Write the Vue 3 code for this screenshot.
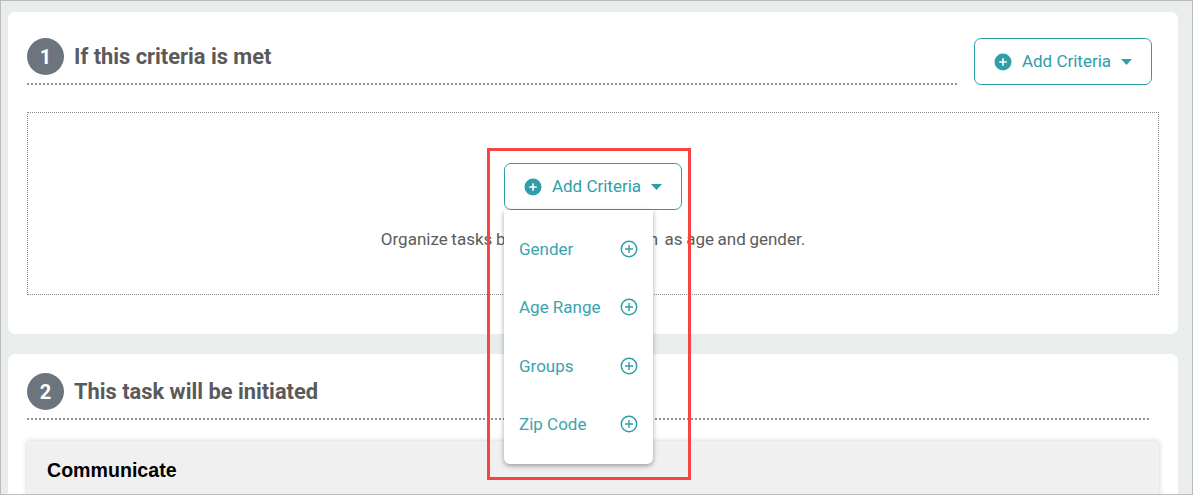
<script setup>
const items = ['Gender', 'Age Range', 'Groups', 'Zip Code']
</script>

<template>
  <div class="page">
    <section class="card first">
      <div class="head-row">
        <div class="head">
          <span class="step">1</span>
          <h2>If this criteria is met</h2>
        </div>
        <button class="add top-add">
          <svg class="solid" viewBox="0 0 18 18" width="18" height="18"><circle cx="9" cy="9" r="8.5" fill="#2e9ea8"/><path d="M9 5.2v7.6M5.2 9h7.6" stroke="#fff" stroke-width="1.6"/></svg>
          <span>Add Criteria</span>
          <svg class="caret" viewBox="0 0 11 6" width="11" height="6"><path d="M0 0h11L5.5 6z" fill="#2e9ea8"/></svg>
        </button>
      </div>
      <div class="empty">
        <div class="anchor">
          <button class="add">
            <svg class="solid" viewBox="0 0 18 18" width="18" height="18"><circle cx="9" cy="9" r="8.5" fill="#2e9ea8"/><path d="M9 5.2v7.6M5.2 9h7.6" stroke="#fff" stroke-width="1.6"/></svg>
            <span>Add Criteria</span>
            <svg class="caret" viewBox="0 0 11 6" width="11" height="6"><path d="M0 0h11L5.5 6z" fill="#2e9ea8"/></svg>
          </button>
          <ul class="menu">
            <li v-for="item in items" :key="item">
              <span>{{ item }}</span>
              <svg viewBox="0 0 18 18" width="18" height="18"><circle cx="9" cy="9" r="7.7" fill="none" stroke="#2e9ea8" stroke-width="1.5"/><path d="M9 5v8M5 9h8" stroke="#2e9ea8" stroke-width="1.4"/></svg>
            </li>
          </ul>
          <div class="highlight"></div>
        </div>
        <p>Organize tasks <span class="tight">based on criteria such</span> as age and gender.</p>
      </div>
    </section>
    <section class="card second">
      <div class="head wide">
        <span class="step">2</span>
        <h2>This task will be initiated</h2>
      </div>
      <div class="panel"><h3>Communicate</h3></div>
    </section>
  </div>
</template>

<style scoped>
.page {
  box-sizing: border-box;
  height: 495px;
  overflow: hidden;
  padding: 11px 14px 0 7px;
  background: #e9eeed;
  border: 1px solid #bcbcbc;
  font-family: Roboto, "Liberation Sans", sans-serif;
}
.card {
  background: #fff;
  border-radius: 7px;
  padding: 26px 19px 0;
}
.first {
  height: 322px;
  box-sizing: border-box;
  margin-bottom: 20px;
}
.second {
  padding-top: 19px;
  height: 200px;
  box-sizing: border-box;
}
.head-row {
  display: flex;
  align-items: flex-start;
  gap: 17px;
}
.head {
  flex: 1;
  box-sizing: border-box;
  height: 47px;
  display: flex;
  align-items: flex-start;
  gap: 10px;
  border-bottom: 2px dotted #8f8f8f;
}
.wide {
  margin-right: 10px;
}
.step {
  width: 37px;
  height: 37px;
  flex: none;
  border-radius: 50%;
  background: #6c757d;
  color: #fff;
  font-size: 20px;
  font-weight: 700;
  display: flex;
  align-items: center;
  justify-content: center;
}
h2 {
  margin: 0;
  font-size: 21.85px;
  line-height: 38px;
  font-weight: 700;
  color: #5a5a5a;
}
.add {
  box-sizing: border-box;
  width: 178px;
  height: 47px;
  display: flex;
  align-items: center;
  justify-content: center;
  gap: 10px;
  padding: 0;
  background: #fff;
  border: 1px solid #2e9ea8;
  border-radius: 7px;
  color: #2e9ea8;
  font: 400 17px Roboto, sans-serif;
}
.add span {
  margin-top: -2px;
}
.caret {
  margin-top: 1px;
}
.top-add {
  flex: none;
  margin-right: 7px;
}
.empty {
  box-sizing: border-box;
  height: 183px;
  margin-top: 27px;
  padding-top: 50px;
  border: 1px dotted #8a8a8a;
  display: flex;
  flex-direction: column;
  align-items: center;
}
.anchor {
  position: relative;
}
.menu {
  position: absolute;
  z-index: 2;
  left: 0;
  top: 47px;
  box-sizing: border-box;
  width: 149px;
  height: 254px;
  margin: 0;
  padding: 9.7px 15px 0;
  list-style: none;
  background: #fff;
  border-radius: 0 0 6px 6px;
  box-shadow: 0 2px 5px rgba(0, 0, 0, 0.35);
}
.menu li {
  height: 58.4px;
  display: flex;
  align-items: center;
  justify-content: space-between;
  color: #3ba3ad;
  font-size: 17px;
}
.highlight {
  position: absolute;
  z-index: 3;
  left: -17px;
  top: -15px;
  box-sizing: border-box;
  width: 204px;
  height: 332px;
  border: 3px solid #f84444;
  pointer-events: none;
}
p {
  margin: 20px 0 0;
  color: #5c5c5c;
  font-size: 17px;
  word-spacing: -0.6px;
  line-height: 19px;
}
.tight {
  letter-spacing: -0.14px;
  margin-right: 3px;
}
.panel {
  margin-top: 21px;
  height: 100px;
  padding: 19px 20px;
  background: #f0f0f0;
  box-shadow: 0 0 5px rgba(0, 0, 0, 0.2);
}
h3 {
  margin: 0;
  font: 700 19.6px/21px "Liberation Sans", Arial, sans-serif;
  color: #000;
}
</style>
